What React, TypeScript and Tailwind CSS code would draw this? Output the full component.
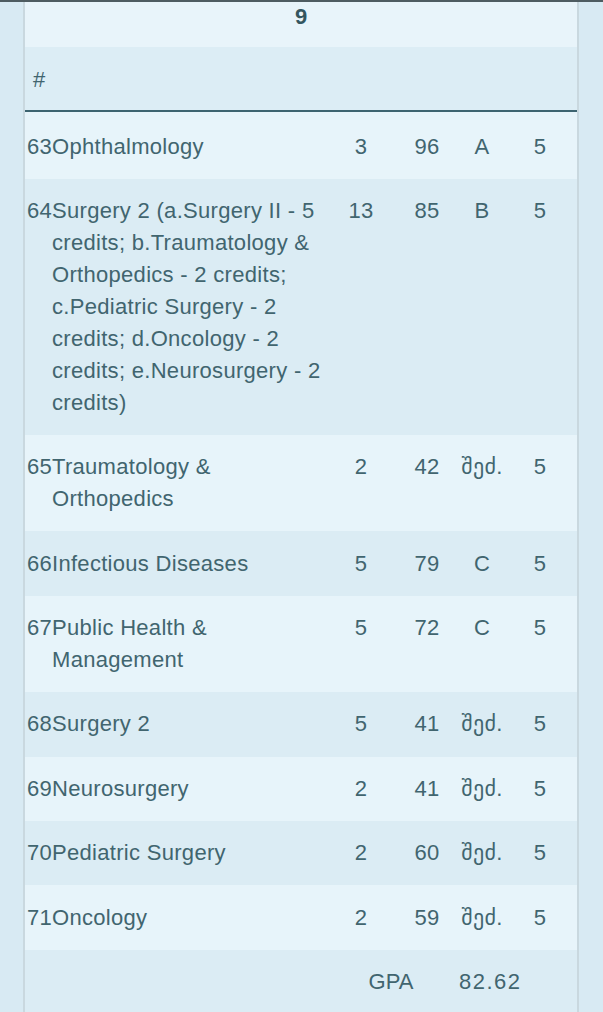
import React from "react";

interface Course {
  no: number; name: string; credits: number; score: number; grade: string; sem: number;
}

const courses: Course[] = [
  { no: 63, name: "Ophthalmology", credits: 3, score: 96, grade: "A", sem: 5 },
  {
    no: 64,
    name: "Surgery 2 (a.Surgery II - 5 credits; b.Traumatology & Orthopedics - 2 credits; c.Pediatric Surgery - 2 credits; d.Oncology - 2 credits; e.Neurosurgery - 2 credits)",
    credits: 13, score: 85, grade: "B", sem: 5,
  },
  { no: 65, name: "Traumatology & Orthopedics", credits: 2, score: 42, grade: "შეძ.", sem: 5 },
  { no: 66, name: "Infectious Diseases", credits: 5, score: 79, grade: "C", sem: 5 },
  { no: 67, name: "Public Health & Management", credits: 5, score: 72, grade: "C", sem: 5 },
  { no: 68, name: "Surgery 2", credits: 5, score: 41, grade: "შეძ.", sem: 5 },
  { no: 69, name: "Neurosurgery", credits: 2, score: 41, grade: "შეძ.", sem: 5 },
  { no: 70, name: "Pediatric Surgery", credits: 2, score: 60, grade: "შეძ.", sem: 5 },
  { no: 71, name: "Oncology", credits: 2, score: 59, grade: "შეძ.", sem: 5 },
];

const cols = "grid grid-cols-[25px_275px_68px_64px_46px_1fr] pl-[2px]";

export default function App() {
  return (
    <div
      className="min-h-screen bg-[#d8eaf3] border-t-2 border-[#4e5c61] text-[#41656f]"
      style={{ fontFamily: '"Liberation Sans", "DejaVu Sans", Arial, sans-serif' }}
    >
      <div className="ml-[23px] mr-[24px] border-x-2 border-[#c9d8df]">
        {/* semester header */}
        <div className="h-[45px] bg-[#e8f4fa] pt-[1px] text-center text-[22px] font-bold leading-[28px] text-[#34565f]">
          9
        </div>
        <div className="h-[63px] bg-[#dcedf5] pl-[8px] pt-[17px] text-[22px] leading-[32px]">#</div>
        <div className="h-[2px] bg-[#3d6470]" />

        {courses.map((c, i) => (
          <div
            key={c.no}
            className={`${cols} pb-[16.2px] text-[22px] leading-[32px] tracking-[0.3px] ${
              i === 0 ? "pt-[18.5px]" : "pt-[16.2px]"
            } ${i % 2 === 0 ? "bg-[#e7f4fa]" : "bg-[#dbecf4]"}`}
          >
            <span>{c.no}</span>
            <span>{c.name}</span>
            <span className="text-center">{c.credits}</span>
            <span className="text-center">{c.score}</span>
            <span className="text-center">{c.grade}</span>
            <span className="text-center pr-[2px]">{c.sem}</span>
          </div>
        ))}

        <div className={`${cols} h-[70px] bg-[#dbecf4] py-[16px] text-[22px] leading-[32px]`}>
          <span />
          <span />
          <span className="col-span-2 text-center pr-[4px]">GPA</span>
          <span className="col-span-2 tracking-[1.5px] pl-[0px]">82.62</span>
        </div>
      </div>
    </div>
  );
}
